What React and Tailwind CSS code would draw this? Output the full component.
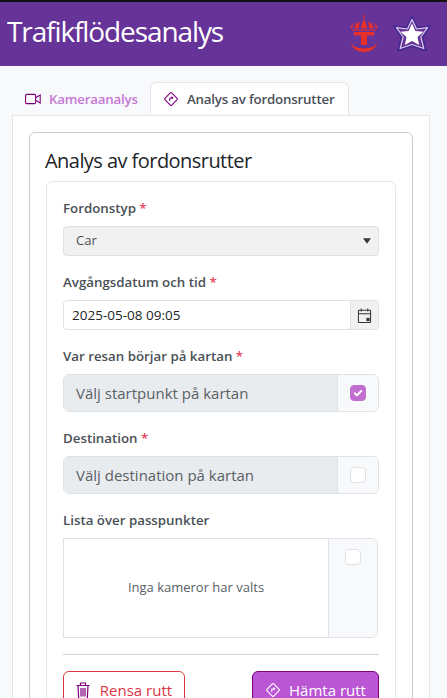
import { useState } from 'react';

function RouteIcon({ className }) {
  return (
    <svg viewBox="0 0 16 16" fill="none" stroke="currentColor" className={className}>
      <rect x="3.2" y="3.2" width="9.6" height="9.6" rx="1" transform="rotate(45 8 8)" strokeWidth="1.1" />
      <path d="M6.800 10V7.200l2.600-.4M8.600 5.600l1.200 1.200-1 1.200" strokeWidth="1.100" />
    </svg>
  );
}

function CameraIcon({ className }) {
  return (
    <svg viewBox="0 0 16 12" fill="none" stroke="currentColor" strokeWidth="1.1" className={className}>
      <rect x="0.6" y="1.4" width="10" height="9.2" rx="1.2" />
      <path d="M10.6 4.8l4.6-2.8v8l-4.6-2.8" />
    </svg>
  );
}

function CalendarIcon() {
  return (
    <svg viewBox="0 0 16 16" className="h-[15px] w-[15px] text-[#333333]" fill="none" stroke="currentColor" strokeWidth="1.100">
      <rect x="1.500" y="2.500" width="13" height="13" rx="0.800" />
      <path d="M1.500 6.200h13M4.500 0.600v3M11.500 0.600v3" />
      <rect x="10" y="10.500" width="3.500" height="3.500" fill="currentColor" stroke="none" />
    </svg>
  );
}

function TrashIcon() {
  return (
    <svg viewBox="0 0 14 17" className="h-[17px] w-[14px] text-[#800080]" fill="none" stroke="currentColor" strokeWidth="1.200">
      <path d="M0.500 3.500h13M4.500 3V1h5v2M2 3.500l.7 13h8.600l.7-13M5 6v8.500M7 6v8.500M9 6v8.500" />
    </svg>
  );
}

function CrownLogo() {
  return (
    <svg viewBox="0 0 30 40" className="h-10 w-[30px] text-[#e8302a]" fill="currentColor">
      <rect x="14.500" y="1" width="1" height="5" />
      <path d="M15 6c-1.800 1.800-2.800 4.800-2.800 8.500h5.600c0-3.700-1-6.700-2.800-8.500z" />
      <path d="M10.500 7.500C7.400 8.600 5.600 11.200 5.600 14.500h4.400c0-2.700.2-4.900.5-7z" />
      <path d="M19.500 7.500c.3 2.100.5 4.300.5 7h4.400c0-3.300-1.800-5.900-4.900-7z" />
      <path d="M1.600 14.500h1.800c0-2.400.7-4.400 2-6-2.500 1.400-4 3.400-3.800 6z" />
      <path d="M28.400 14.500h-1.800c0-2.400-.7-4.400-2-6 2.500 1.400 4 3.400 3.800 6z" />
      <rect x="3" y="15.500" width="24" height="1" />
      <path d="M5 18h20v3.600h-7v9.400h-6v-9.400H5z" />
      <path d="M2 29c2.500 3.800 7 5.400 13 5.400S25.500 32.800 28 29c-1 5.400-6.500 9-13 9S3 34.400 2 29z" />
    </svg>
  );
}

function StarLogo() {
  return (
    <svg viewBox="0 0 40 38" className="h-[38px] w-10">
      <path d="M20 2.500l5 10.500 12.500-1.500-7.500 10.500 3.500 13-13.500-4.500-13.500 4.500 3.500-13-7.500-10.500L15 13z" fill="#4b2a93" stroke="#4b2a93" strokeWidth="3" strokeLinejoin="round" />
      <path d="M20 4.500l4.500 9.500 11-1.300-6.700 9.300 3 11.500-11.800-4-11.800 4 3-11.500-6.700-9.300 11 1.300z" fill="#663399" stroke="#d9cdf0" strokeWidth="1.200" strokeLinejoin="round" />
      <path d="M20 8.500l3.400 7.400 8.100.8-6 5.400 1.700 8-7.200-4.100-7.200 4.100 1.700-8-6-5.400 8.100-.8z" fill="#ffffff" />
    </svg>
  );
}

function Label({ children, required }) {
  return (
    <label className="mb-2 block text-[13.300px] leading-[20px] font-semibold text-[#495057]">
      {children}
      {required && <span className="text-[#e4405a]"> *</span>}
    </label>
  );
}

function Box({ checked }) {
  return (
    <span className={`flex h-4 w-4 items-center justify-center rounded-[4px] border ${checked ? 'border-[#c06fd0] bg-[#c06fd0]' : 'border-[#dee2e6] bg-white'}`}>
      {checked && (
        <svg viewBox="0 0 12 12" className="h-3 w-3" fill="none" stroke="#ffffff" strokeWidth="2" strokeLinecap="round" strokeLinejoin="round">
          <path d="M2.800 6.200l2.200 2.200 4.200-4.400" />
        </svg>
      )}
    </span>
  );
}

function PickRow({ text, checked }) {
  return (
    <div className="flex h-[38px] overflow-hidden rounded-md border border-[#dee2e6]">
      <div className="flex flex-1 items-center bg-[#e9ecef] pl-3 text-[15px] text-[#595f65]">{text}</div>
      <div className="flex w-[41px] items-center justify-center border-l border-[#dee2e6] bg-[#f8f9fa]">
        <Box checked={checked} />
      </div>
    </div>
  );
}

export default function App() {
  const [tab] = useState('rutter');

  return (
    <div className="h-[698px] overflow-hidden bg-[#f8f9fa] font-['Open_Sans','Noto_Sans',sans-serif]">
      <div className="h-[2px] bg-[#111111]" />

      {/* Header */}
      <header className="flex h-[64px] items-center justify-between bg-[#663399] pr-[15px] pl-[7px]">
        <h1 className="mb-[6px] text-[28px] leading-none font-normal tracking-[-1.100px] text-white">Trafikflödesanalys</h1>
        <div className="flex items-center gap-[13px]">
          <CrownLogo />
          <StarLogo />
        </div>
      </header>

      {/* Tabs */}
      <nav className="mt-[16px] flex pl-[13px] text-[13.300px] leading-[20px] font-semibold tracking-[-0.2px] whitespace-nowrap">
        <div className="flex h-[33px] w-[137px] items-center gap-[8px] px-[12px] text-[#c678d6]">
          <CameraIcon className="h-3 w-4 shrink-0 text-[#800080]" />
          Kameraanalys
        </div>
        <div className={`-mb-px flex h-[33px] w-[199px] items-center gap-[8px] rounded-t-md border border-b-0 border-[#e4e6ea] bg-white px-[12px] ${tab === 'rutter' ? 'text-[#495057]' : ''}`}>
          <RouteIcon className="h-4 w-4 shrink-0 text-[#800080]" />
          Analys av fordonsrutter
        </div>
      </nav>

      <main className="mr-[17px] ml-[12px] border border-[#e4e6ea] bg-white px-[16px] pt-[16px] pb-10">
        <section className="rounded-md border border-[#cccccc] px-[16px] pt-[16px] pb-4">
          <h2 className="mb-[8px] -ml-px text-[20px] leading-[24px] font-normal tracking-[-0.55px] text-[#212529]">Analys av fordonsrutter</h2>

          <div className="rounded-md border border-[#e4e6ea] px-[16px] pt-[16px] pb-4">
            <div className="mb-[16px]">
              <Label required>Fordonstyp</Label>
              <div className="flex h-[30px] items-center justify-between rounded-[4px] border border-[#dee2e6] bg-[#f1f1f1] pr-[7px] pl-[12px] text-[13px] text-[#495057]">
                Car
                <svg viewBox="0 0 10 7" className="h-[6px] w-[8px]" fill="#343a40"><path d="M0 0h10L5 7z" /></svg>
              </div>
            </div>

            <div className="mb-[16px]">
              <Label required>Avgångsdatum och tid</Label>
              <div className="flex h-[30px] overflow-hidden rounded-[4px] border border-[#dee2e6]">
                <div className="flex flex-1 items-center pl-[8px] text-[13.500px] text-[#212529]">2025-05-08 09:05</div>
                <div className="flex w-[28px] items-center justify-center border-l border-[#dee2e6] bg-[#f1f1f1]">
                  <CalendarIcon />
                </div>
              </div>
            </div>

            <div className="mb-[16px]">
              <Label required>Var resan börjar på kartan</Label>
              <PickRow text="Välj startpunkt på kartan" checked />
            </div>

            <div className="mb-[16px]">
              <Label required>Destination</Label>
              <PickRow text="Välj destination på kartan" />
            </div>

            <div>
              <Label>Lista över passpunkter</Label>
              <div className="mr-px flex h-[100px] rounded-r-md border border-[#dee2e6]">
                <div className="flex flex-1 items-center justify-center text-[13px] text-[#595f65]">Inga kameror har valts</div>
                <div className="flex w-[49px] justify-center rounded-r-md border-l border-[#dee2e6] bg-[#f8f9fa] pt-[10px]">
                  <Box />
                </div>
              </div>
            </div>

            <hr className="my-[16px] border-t border-[#d4d4d4]" />

            <div className="flex justify-between">
              <button className="flex h-[38px] w-[122px] items-center justify-center gap-[10px] rounded-md border border-[#dc3545] bg-white text-[15px] text-[#dc3545]">
                <TrashIcon />
                Rensa rutt
              </button>
              <button className="flex h-[38px] w-[127px] items-center justify-center gap-[8px] rounded-md border border-[#800080] bg-[#ba55d3] text-[15px] text-white">
                <RouteIcon className="h-4 w-4 text-white" />
                Hämta rutt
              </button>
            </div>
          </div>
        </section>
      </main>
    </div>
  );
}
